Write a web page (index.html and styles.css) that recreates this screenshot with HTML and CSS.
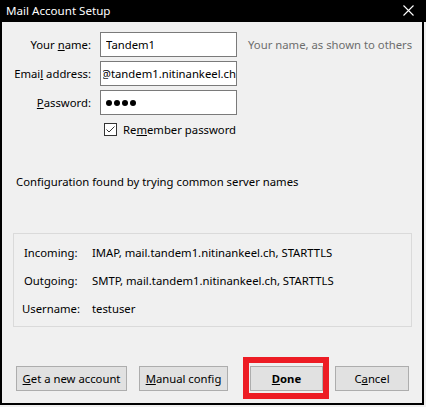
FILE: index.html
```html
<!DOCTYPE html>
<html>
<head>
<meta charset="utf-8">
<link rel="stylesheet" href="styles.css">
</head>
<body>
<div class="window">
  <div class="titlebar">
    <span class="title">Mail Account Setup</span>
    <svg class="close" width="11" height="11" viewBox="0 0 11 11"><path d="M0.5 0.5 L10.5 10.5 M10.5 0.5 L0.5 10.5" stroke="#fff" stroke-width="1.1" fill="none"/></svg>
  </div>
  <div class="content">
    <div class="form">
      <label class="lbl" for="name">Your <u>n</u>ame:</label>
      <input id="name" class="field" type="text" value="Tandem1" readonly>
      <div class="hint">Your name, as shown to others</div>

      <label class="lbl" for="email">Emai<u>l</u> address:</label>
      <input id="email" class="field field-end" type="text" dir="rtl" value="testuser@tandem1.nitinankeel.ch" readonly>
      <div></div>

      <label class="lbl"><u>P</u>assword:</label>
      <div class="field pw"><i></i><i></i><i></i><i></i></div>
      <div></div>
    </div>
    <div class="remember">
      <svg class="cb" width="13" height="13" viewBox="0 0 13 13"><rect x="0.5" y="0.5" width="12" height="12" fill="#fff" stroke="#333"/><path d="M2.5 6.5 L5 9 L10.5 3.5" stroke="#333" stroke-width="1" fill="none"/></svg>
      <span>Re<u>m</u>ember password</span>
    </div>
    <div class="status">Configuration found by trying common server names</div>
    <div class="group">
      <div class="grow"><span class="glbl">Incoming:</span><span>IMAP, mail.tandem1.nitinankeel.ch, STARTTLS</span></div>
      <div class="grow"><span class="glbl">Outgoing:</span><span>SMTP, mail.tandem1.nitinankeel.ch, STARTTLS</span></div>
      <div class="grow"><span class="glbl user">Username:</span><span>testuser</span></div>
    </div>
    <div class="buttons">
      <button class="btn w-get"><u>G</u>et a new account</button>
      <button class="btn w-manual"><u>M</u>anual config</button>
      <button class="btn w-done done"><u>D</u>one</button>
      <button class="btn w-cancel">C<u>a</u>ncel</button>
    </div>
  </div>
</div>
</body>
</html>
```
FILE: styles.css
```css
html, body {
  margin: 0;
  padding: 0;
  background: #f0f0f0;
}
body {
  font-family: "Noto Sans", "Open Sans", sans-serif;
  font-size: 11.3px;
  color: #000;
}
u { text-decoration: underline; text-underline-offset: 1px; }
.window {
  width: 426px;
  height: 407px;
  display: flex;
  flex-direction: column;
}
.titlebar {
  height: 22px;
  background: #000;
  color: #fff;
  display: flex;
  align-items: center;
  justify-content: space-between;
  padding: 0 12px 2px 6px;
  box-sizing: border-box;
  flex-shrink: 0;
}
.title { font-size: 11.6px; }
.close { margin-top: 1px; }
.content {
  width: 424px;
  height: 383px;
  box-sizing: border-box;
  border: 2px solid #000;
  border-top: 0;
  background: #f0f0f0;
  display: flex;
  flex-direction: column;
}
.form {
  display: grid;
  grid-template-columns: 89px 137px 1fr;
  grid-auto-rows: 25px;
  column-gap: 9px;
  row-gap: 4px;
  padding-top: 10px;
  align-items: center;
}
.form .hint { margin-left: 2px; color: #6d6d6d; white-space: nowrap; }
.lbl { text-align: right; white-space: nowrap; }
.field {
  width: 137px;
  height: 25px;
  margin: 0;
  box-sizing: border-box;
  border: 1px solid #7a7a7a;
  border-radius: 0;
  background: #fff;
  padding: 0 3px 0 5px;
  font-family: inherit;
  font-size: 11.3px;
  color: #000;
  outline: none;
}
.field-end { padding: 0 0 0 2px; }
.pw {
  display: flex;
  align-items: center;
  gap: 1px;
  padding-left: 5px;
}
.pw i {
  width: 6px;
  height: 6px;
  border-radius: 50%;
  background: #000;
  margin-right: 1px;
}
.remember {
  display: flex;
  align-items: center;
  gap: 6px;
  margin: 8px 0 0 102px;
  height: 13px;
}
.status {
  margin: 38px 0 0 14px;
  line-height: 16px;
}
.group {
  margin: 43px 10px 0 11px;
  border: 1px solid #dadada;
  padding: 4px 10px;
}
.grow {
  height: 28px;
  display: flex;
  align-items: center;
}
.glbl { width: 68px; flex-shrink: 0; }
.glbl.user { margin-left: -2px; width: 70px; }
.buttons {
  display: flex;
  margin: 39px 0 0 14px;
  gap: 12px;
}
.btn {
  height: 25px;
  font-family: inherit;
  font-size: 11.3px;
  color: #000;
  background: #e1e1e1;
  border: 1px solid #adadad;
  padding: 0;
  border-radius: 0;
}
.w-get { width: 111px; }
.w-manual { width: 89px; }
.w-done { width: 73px; margin-left: 10px; font-weight: bold; }
.w-cancel { width: 74px; }
.done { position: relative; }
.done::after {
  content: "";
  position: absolute;
  left: -8px;
  right: -7px;
  top: -10px;
  bottom: -9px;
  border: 6px solid #ed1c24;
}
```
